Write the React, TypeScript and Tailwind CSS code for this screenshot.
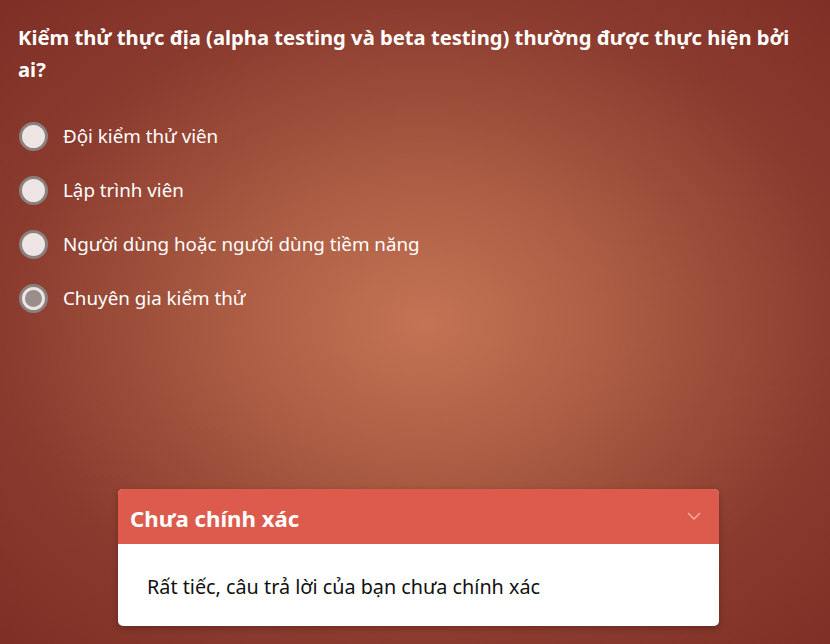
const options = ['Đội kiểm thử viên', 'Lập trình viên', 'Người dùng hoặc người dùng tiềm năng', 'Chuyên gia kiểm thử'];
const selected = 3;

export default function App() {
  return (
    <div
      className="flex h-[644px] w-[830px] flex-col overflow-hidden bg-[radial-gradient(ellipse_at_51%_50%,#c47454_0%,#a95a42_35%,#8a3b2e_70%,#7f2e25_100%)] font-['Noto_Sans',sans-serif]"
    >
      <h1 className="px-[18px] pt-[21px] text-[20.2px] font-bold leading-[32px] text-white">
        Kiểm thử thực địa (alpha testing và beta testing) thường được thực hiện bởi ai?
      </h1>

      <div className="mt-[37px] flex flex-col gap-[26px] px-[19px]">
        {options.map((o, i) => (
          <label key={o} className="flex h-[28px] items-center gap-[15px] text-[18.8px] text-white">
            <span className="flex h-[29px] w-[29px] items-center justify-center rounded-full border-[3px] border-[#8c807e] bg-[#ede4e3]">
              {i === selected && <span className="h-[17px] w-[17px] rounded-full bg-[#9a8e8c]" />}
            </span>
            {o}
          </label>
        ))}
      </div>

      <div className="mt-auto mb-[18px] ml-[118px] w-[601px] overflow-hidden rounded-[5px] bg-white shadow-[0_2px_6px_rgba(0,0,0,0.25)]">
        <div className="flex h-[55px] items-center justify-between bg-[#dc5b4d] pl-[12px] pr-[18px] pt-[5px]">
          <span className="text-[22.2px] font-bold text-white">Chưa chính xác</span>
          <svg width="14" height="8" viewBox="0 0 14 8" fill="none" className="mb-[6px]">
            <polyline points="1,1 7,7 13,1" stroke="#f2aaa1" strokeWidth="1.5" />
          </svg>
        </div>
        <div className="px-[29px] pt-[31px] pb-[27px] text-[19.8px] leading-[24px] text-[#111]">
          Rất tiếc, câu trả lời của bạn chưa chính xác
        </div>
      </div>
    </div>
  );
}
